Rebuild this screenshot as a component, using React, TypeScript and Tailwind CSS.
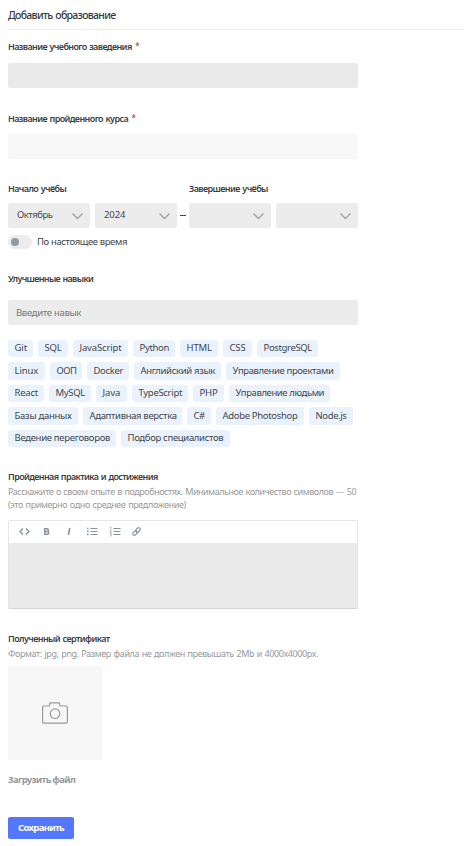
import type { ReactNode } from 'react';

const tagRows: [string, string][][] = [
  [
    ['Git', 'w-[25px] tracking-[-0.1px]'],
    ['SQL', 'w-[30px] tracking-[-0.19px]'],
    ['JavaScript', 'w-[55px] tracking-[-0.15px]'],
    ['Python', 'w-[42px] tracking-[-0.34px]'],
    ['HTML', 'w-[38px] tracking-[-0.11px]'],
    ['CSS', 'w-[29px] tracking-[-0.15px]'],
    ['PostgreSQL', 'w-[61px] tracking-[-0.36px]'],
  ],
  [
    ['Linux', 'w-[37px] tracking-[-0.1px]'],
    ['ООП', 'w-[32px] tracking-[-0.5px]'],
    ['Docker', 'w-[42px] tracking-[-0.35px]'],
    ['Английский язык', 'w-[87px] tracking-[-0.33px]'],
    ['Управление проектами', 'w-[114px] tracking-[-0.38px]'],
  ],
  [
    ['React', 'w-[36px] tracking-[-0.22px]'],
    ['MySQL', 'w-[42px] tracking-[-0.31px]'],
    ['Java', 'w-[31px] tracking-[-0.05px]'],
    ['TypeScript', 'w-[56px] tracking-[-0.3px]'],
    ['PHP', 'w-[31px] tracking-[-0.18px]'],
    ['Управление людьми', 'w-[101px] tracking-[-0.4px]'],
  ],
  [
    ['Базы данных', 'w-[70px] tracking-[-0.29px]'],
    ['Адаптивная верстка', 'w-[99px] tracking-[-0.34px]'],
    ['C#', 'w-[24px] tracking-[-0.58px]'],
    ['Adobe Photoshop', 'w-[88px] tracking-[-0.33px]'],
    ['Node.js', 'w-[44px] tracking-[-0.39px]'],
  ],
  [
    ['Ведение переговоров', 'w-[108px] tracking-[-0.3px]'],
    ['Подбор специалистов', 'w-[109px] tracking-[-0.32px]'],
  ],
];

function Label({ children, required, className = 'tracking-[-0.6px]' }: { children: ReactNode; required?: boolean; className?: string }) {
  return (
    <div className={`flex h-3 whitespace-nowrap text-[9px] font-semibold leading-3 text-[#3c3f44] [word-spacing:0.7px] ${className}`}>
      {children}
      {required && <span className="ml-[3.5px] text-[8px] font-semibold leading-[9px] text-[#d0453e]">*</span>}
    </div>
  );
}

function Select({ children }: { children?: ReactNode }) {
  return (
    <div className="flex h-[25px] w-[82px] items-center justify-between rounded-[2px] bg-[#ececec] pl-[9px] pr-[7px] text-[9.5px]">
      <span>{children}</span>
      <svg className="mt-px h-[7px] w-[11px]" viewBox="0 0 11 7" fill="none" stroke="#9aa2a9" strokeWidth="1.4">
        <path d="M.5.6 5.5 5.6l5-5" />
      </svg>
    </div>
  );
}

export default function App() {
  return (
    <div className="h-[846px] w-[466px] overflow-hidden bg-white pl-2 font-['Noto_Sans',sans-serif] text-[#42464b]">
      <h1 className="h-[30px] w-[456px] whitespace-nowrap border-b border-[#ececec] pt-[5px] text-[10.5px] font-medium leading-5 tracking-[-0.71px] text-[#35383c] [word-spacing:1px]">
        Добавить образование
      </h1>

      <Label required className="mt-[11px] tracking-[-0.6px]">Название учебного заведения</Label>
      <div className="mt-[10px] h-[25px] w-[350px] rounded-[2px] bg-[#eaeaea]" />

      <Label required className="mt-[25px] tracking-[-0.6px]">Название пройденного курса</Label>
      <div className="mt-[9px] h-[25px] w-[350px] rounded-[2px] bg-[#f8f8f8]" />

      <div className="mt-6 flex">
        <Label className="w-[181px] tracking-[-0.6px]">Начало учёбы</Label>
        <Label>Завершение учёбы</Label>
      </div>
      <div className="mt-2 flex w-[350px] items-center">
        <Select><span className="tracking-[-0.47px]">Октябрь</span></Select>
        <div className="ml-[5px]"><Select><span className="tracking-[-0.08px]">2024</span></Select></div>
        <div className="flex w-3 justify-center"><div className="h-px w-[6px] bg-[#42464b]" /></div>
        <Select />
        <div className="ml-[5px]"><Select /></div>
      </div>

      <div className="mt-[7px] flex h-[14px] items-center">
        <div className="flex h-[14px] w-6 items-center rounded-full bg-[#ececec] pl-[3px]">
          <div className="h-2 w-2 rounded-full bg-[#919ba5]" />
        </div>
        <span className="ml-[5px] whitespace-nowrap text-[9.5px] tracking-[-0.38px]">По настоящее время</span>
      </div>

      <Label className="mt-6 tracking-[-0.67px]">Улучшенные навыки</Label>
      <div className="mt-[15px] flex h-[25px] w-[350px] items-center rounded-[2px] bg-[#ececec] pl-2 pt-px text-[9.5px] tracking-[-0.31px] text-[#777]">
        Введите навык
      </div>

      <div className="mt-[15px] flex flex-col gap-[5px]">
        {tagRows.map((row, i) => (
          <div key={i} className="flex h-[17.4px] gap-[5px]">
            {row.map(([name, style]) => (
              <span key={name} className={`whitespace-nowrap rounded-[3px] bg-[#eaf2fe] pl-[6.5px] text-[9.5px] leading-[16.6px] ${i === 1 || i === 3 ? 'pt-[0.6px]' : ''} ${style}`}>
                {name}
              </span>
            ))}
          </div>
        ))}
      </div>

      <Label className="mt-6 tracking-[-0.62px]">Пройденная практика и достижения</Label>
      <p className="mt-[2px] whitespace-nowrap text-[9px] leading-[13px] text-[#999] [word-spacing:0.7px]">
        <span className="tracking-[-0.46px]">Расскажите о своем опыте в подробностях. Минимальное количество символов — 50</span>
        <br />
        <span className="tracking-[-0.39px]">(это примерно одно среднее предложение)</span>
      </p>

      <div className="mt-[9px] flex h-[89px] w-[350px] flex-col overflow-hidden rounded-[2px] border border-[#e7e7e7] border-b-[#d5d5d5]">
        <div className="h-[22px] bg-white">
          <svg className="h-[22px] w-[140px]" viewBox="0 0 140 22" fill="none" stroke="#8a949e" strokeWidth="1.2">
            <path strokeWidth="1.4" d="m14 7.500-3 3 3 3M17 7.500l3 3-3 3" />
            <path strokeWidth="1.5" d="M35.800 7.700v5.600h2.500a1.450 1.450 0 0 0 0-2.900h-2.500h2.200a1.350 1.350 0 0 0 0-2.700z" />
            <path strokeWidth="1.6" d="m60.800 7-1.300 7" />
            <path d="M81.500 7.500h7M81.500 10.500h7M81.500 13.500h7" />
            <path strokeWidth="1.4" d="M78 7.500h1.600M78 10.500h1.600M78 13.500h1.600" />
            <path d="M104.500 7.500h7M104.500 10.500h7M104.500 13.500h7" />
            <path strokeWidth=".7" d="m101 6.800.9-.5v2.100M101 9.700h1.300l-1.300 1.800h1.500M101 12.800h1.400l-.7 1 .7.600-.6.700H101" />
            <g transform="rotate(-45 127.500 10.500)">
              <rect x="122.800" y="8.900" width="5" height="3.200" rx="1.500" />
              <rect x="127.200" y="8.900" width="5" height="3.200" rx="1.500" />
            </g>
          </svg>
        </div>
        <div className="flex-1 bg-[#eaeaea]" />
      </div>

      <Label className="mt-6 tracking-[-0.6px]">Полученный сертификат</Label>
      <p className="mt-[3px] h-3 whitespace-nowrap text-[9px] leading-3 tracking-[-0.4px] text-[#999] [word-spacing:0.7px]">
        Формат: jpg, png. Размер файла не должен превышать 2Mb и 4000x4000px.
      </p>
      <div className="mt-[6px] flex h-[94px] w-[94px] items-center justify-center rounded-[2px] bg-[#f7f7f7] pt-px">
        <svg className="h-[22px] w-[26px]" viewBox="0 0 26 22" fill="none" stroke="#999" strokeWidth="1.2">
          <path d="M2.200 4h4.600c.7 0 .8-.4.8-1V2c0-.8.4-1.200 1-1.200h8.200c.7 0 1 .4 1 1.200v1c0 .6.2 1 .9 1h5c1.100 0 1.700.6 1.700 1.600v14c0 1-.6 1.600-1.600 1.600H2.200c-1 0-1.600-.6-1.600-1.600v-14C.6 4.600 1.200 4 2.200 4Z" />
          <circle cx="13" cy="11.700" r="4.800" />
        </svg>
      </div>

      <div className="mt-[13px] h-[14px] whitespace-nowrap text-[9.5px] font-bold leading-[14px] tracking-[-0.68px] text-[#999]">Загрузить файл</div>
      <button className="mt-[30px] flex h-[22px] w-[66px] items-center justify-center whitespace-nowrap rounded-[2px] bg-[#5577ff] text-[9.5px] font-bold tracking-[-0.68px] text-white">
        Сохранить
      </button>
    </div>
  );
}
